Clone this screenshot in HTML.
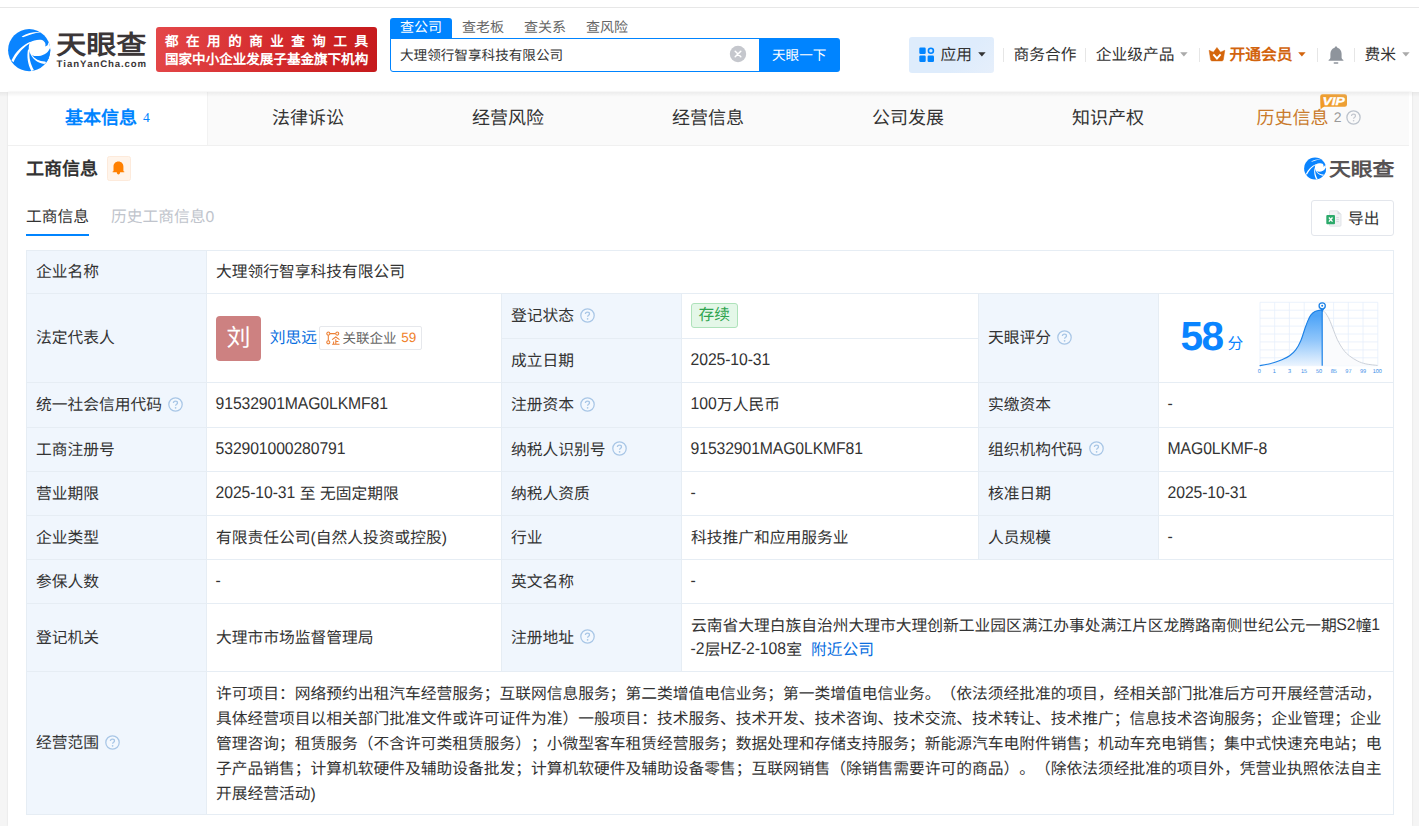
<!DOCTYPE html>
<html lang="zh-CN">
<head>
<meta charset="utf-8">
<title>天眼查</title>
<style>
*{box-sizing:border-box;margin:0;padding:0}
html,body{width:1419px;height:826px;overflow:hidden}
body{background:#f5f5f5;font-family:"Liberation Sans",sans-serif;color:#333;font-size:15.75px;position:relative;text-rendering:geometricPrecision;text-spacing-trim:space-all;font-kerning:none}
.abs{position:absolute}
.t{position:absolute;white-space:nowrap;line-height:1;margin-top:1.1px}
#topstrip{left:0;top:0;width:1419px;height:9px;background:#fff;border-bottom:2px solid #e7e7e7}
#header{left:0;top:8px;width:1419px;height:84px;background:#fff}
#hshadow{left:0;top:92px;width:1419px;height:5px;background:linear-gradient(rgba(0,0,0,.055),rgba(0,0,0,0))}
#card{left:8px;top:92px;width:1404px;height:734px;background:#fff;box-shadow:0 0 2px rgba(0,0,0,.10)}
#tabs{left:8px;top:92px;width:1400.8px;height:54px;background:#fafafa;border-bottom:1px solid #f0f0f0}
#tabs .on{position:absolute;left:0;top:0;width:200px;height:53px;background:#fff;border-right:1px solid #f2f2f2}
.tab{position:absolute;top:92px;height:53px;line-height:53.6px;font-size:18px;text-align:center;width:200px;color:#333;white-space:nowrap}
.sep{position:absolute;top:48px;width:1px;height:14px;background:#e6e6e6}
.nav{position:absolute;top:47.9px;line-height:16px;font-size:15.75px;color:#333;white-space:nowrap}
/* table */
.c{position:absolute;border:1px solid #e6edf4;background:#fff;padding:2.2px 9px 0;display:flex;align-items:center;font-size:15.75px;color:#333;white-space:nowrap;line-height:23.6px}
.l{background:#f0f6fd}
.a{display:inline-block;position:relative;top:-1.1px;left:-0.4px;letter-spacing:-0.11px;transform:scaleY(1.08);transform-origin:0 72%}
.q{display:block;width:15px;height:15px;margin-left:6.3px;position:relative;top:-1.9px}
</style>
</head>
<body>
<div class="abs" id="topstrip"></div>
<div class="abs" id="header"></div>
<div class="abs" id="card"></div>
<div class="abs" id="tabs"><div class="on"></div></div>
<div class="abs" id="hshadow"></div>
<!--HEADER-->
<!-- logo -->
<svg class="abs" style="left:4px;top:24px" width="52" height="52" viewBox="0 0 826 826">
 <defs><clipPath id="lc"><circle cx="400" cy="415" r="335"/></clipPath></defs>
 <circle cx="400" cy="415" r="335" fill="#0a84ff"/>
 <g clip-path="url(#lc)">
 <path d="M415 290 C470 252 590 236 640 268 C672 292 705 298 800 285 L800 425 L735 400 C722 520 685 600 640 636 C540 622 440 560 400 430 C385 380 395 320 415 290Z" fill="#fff"/>
 <path d="M600 248 L711 285 L692 338 L655 358 C668 318 655 282 600 248Z" fill="#0a84ff"/>
 <path d="M445 495 C540 530 680 500 728 388 L800 380 L800 660 L648 597 C560 590 490 555 445 495Z" fill="#0a84ff"/>
 <path d="M280 198 C370 146 480 122 584 130 C480 146 394 172 302 210Z" fill="#fff"/>
 <path d="M118 580 C180 438 300 328 420 280 L428 296 C322 352 212 470 150 606Z" fill="#fff"/>
 <path d="M433 746 C378 640 358 520 383 398 L407 430 C392 530 422 640 477 735Z" fill="#fff"/>
 </g>
</svg>
<div class="t" style="left:56.3px;top:31.6px;font-size:30px;font-weight:bold;color:#3b3637;transform:scaleY(.88);transform-origin:0 0">天眼查</div>
<div class="t" style="left:56.6px;top:59.4px;font-size:9.6px;font-weight:bold;color:#3b3637;letter-spacing:0.9px">TianYanCha.com</div>
<!-- red banner -->
<div class="abs" style="left:156px;top:27px;width:221px;height:45px;border-radius:3px;background:linear-gradient(100deg,#e4484a 0%,#d42a2c 55%,#c51a1c 100%)"></div>
<div class="t" style="left:165px;top:34px;font-size:13.5px;font-weight:bold;color:#fff;letter-spacing:7.55px">都在用的商业查询工具</div>
<div class="t" style="left:165px;top:52px;font-size:13.55px;font-weight:bold;color:#fff;letter-spacing:0">国家中小企业发展子基金旗下机构</div>
<!-- search -->
<div class="abs" style="left:390px;top:18px;width:62px;height:21px;background:#0084ff;border-radius:3px 3px 0 0"></div>
<div class="t" style="left:400px;top:19.2px;font-size:14px;color:#fff">查公司</div>
<div class="t" style="left:462px;top:19.2px;font-size:14px;color:#666">查老板</div>
<div class="t" style="left:524px;top:19.2px;font-size:14px;color:#666">查关系</div>
<div class="t" style="left:586px;top:19.2px;font-size:14px;color:#666">查风险</div>
<div class="abs" style="left:390px;top:38px;width:371px;height:34px;background:#fff;border:1px solid #0084ff;border-radius:0 0 0 3px"></div>
<div class="t" style="left:400px;top:48px;font-size:13.6px;color:#333">大理领行智享科技有限公司</div>
<svg class="abs" style="left:729px;top:45px" width="18" height="18" viewBox="0 0 18 18"><circle cx="9" cy="9" r="8.2" fill="#c5c7cd"/><path d="M6.2 6.2 L11.8 11.8 M11.8 6.2 L6.2 11.8" stroke="#fff" stroke-width="1.5" stroke-linecap="round"/></svg>
<div class="abs" style="left:759px;top:38px;width:81px;height:34px;background:#0084ff;border-radius:0 3px 3px 0"></div>
<div class="t" style="left:772px;top:48px;font-size:13.6px;color:#fff">天眼一下</div>
<!-- nav -->
<div class="abs" style="left:909px;top:37px;width:85px;height:36px;border-radius:3px;background:linear-gradient(135deg,#deecfc 0%,#deecfc 60%,#e6effb 100%)"></div>
<svg class="abs" style="left:919px;top:47px" width="16" height="16" viewBox="0 0 16 16"><rect x="0.3" y="0.5" width="6.4" height="6.4" rx="1.2" fill="#0084ff"/><rect x="0.3" y="8.6" width="6.4" height="6.4" rx="1.2" fill="#0084ff"/><rect x="8.6" y="8.6" width="6.4" height="6.4" rx="1.2" fill="#0084ff"/><circle cx="11.9" cy="3.8" r="2.5" fill="#cfe6ff" stroke="#0084ff" stroke-width="1.6"/></svg>
<div class="nav" style="left:940.5px">应用</div>
<svg class="abs" style="left:977.5px;top:52.3px" width="8" height="5" viewBox="0 0 8 5"><path d="M0.2 0.3 L7.6 0.3 L3.9 4.6Z" fill="#333"/></svg>
<div class="sep" style="left:1003px"></div>
<div class="nav" style="left:1013.5px">商务合作</div>
<div class="sep" style="left:1085px"></div>
<div class="nav" style="left:1095.7px">企业级产品</div>
<svg class="abs" style="left:1180.0px;top:52.3px" width="8" height="5" viewBox="0 0 8 5"><path d="M0.2 0.3 L7.6 0.3 L3.9 4.6Z" fill="#aaa"/></svg>
<div class="sep" style="left:1199px"></div>
<svg class="abs" style="left:1208px;top:47px" width="18" height="15" viewBox="0 0 18 15"><path d="M1.1 3.3 L5.4 5.2 L8.95 0.5 L12.5 5.2 L16.8 3.3 L15.3 12.8 Q15.1 13.9 14 13.9 L3.9 13.9 Q2.8 13.9 2.6 12.8Z" fill="#d4650b" stroke="#d4650b" stroke-width="0.5" stroke-linejoin="round"/><path d="M5.3 7.4 L8.95 11.5 L12.6 7.4" fill="none" stroke="#fff" stroke-width="1.9"/></svg>
<div class="nav" style="left:1229.5px;font-weight:bold;color:#d2640e">开通会员</div>
<svg class="abs" style="left:1297.8px;top:52.3px" width="8" height="5" viewBox="0 0 8 5"><path d="M0.2 0.3 L7.6 0.3 L3.9 4.6Z" fill="#d2640e"/></svg>
<div class="sep" style="left:1317px"></div>
<svg class="abs" style="left:1328px;top:45.5px" width="16" height="19" viewBox="0 0 16 19"><path d="M8 0.6 C8.8 0.6 9.3 1.1 9.3 1.8 C12 2.5 13.6 4.8 13.6 7.8 L13.6 11.4 C13.6 12.6 14.4 13.4 15.4 14 L15.4 14.8 L0.6 14.8 L0.6 14 C1.6 13.4 2.4 12.6 2.4 11.4 L2.4 7.8 C2.4 4.8 4 2.5 6.7 1.8 C6.7 1.1 7.2 0.6 8 0.6Z" fill="#8e949c"/><rect x="5.6" y="16.3" width="4.8" height="1.5" rx="0.7" fill="#8e949c"/></svg>
<div class="sep" style="left:1354px"></div>
<div class="nav" style="left:1364.5px">费米</div>
<svg class="abs" style="left:1401.5px;top:52.3px" width="8" height="5" viewBox="0 0 8 5"><path d="M0.2 0.3 L7.6 0.3 L3.9 4.6Z" fill="#aaa"/></svg>
<!--/HEADER-->
<!--TABS-->
<div class="tab" style="left:8px;width:199px;color:#0084ff;font-weight:bold;text-align:left;padding-left:57px">基本信息<span style="font-family:'Liberation Serif',serif;font-weight:normal;font-size:13.5px;margin-left:6px;position:relative;top:-1.8px">4</span></div>
<div class="tab" style="left:208px">法律诉讼</div>
<div class="tab" style="left:408px">经营风险</div>
<div class="tab" style="left:608px">经营信息</div>
<div class="tab" style="left:808px">公司发展</div>
<div class="tab" style="left:1008px">知识产权</div>
<div class="tab" style="left:1256.5px;width:auto;text-align:left;color:#c97a2c">历史信息</div>
<div class="t" style="left:1333.7px;top:108.9px;font-size:14px;color:#999">2</div>
<svg class="abs" style="left:1346px;top:110.3px" width="15" height="15" viewBox="0 0 15 15"><circle cx="7.5" cy="7.5" r="6.6" fill="none" stroke="#bcc3cc" stroke-width="1.3"/><path d="M5.5 6.1 C5.5 4.9 6.4 4.2 7.5 4.2 C8.7 4.2 9.5 4.9 9.5 5.9 C9.5 7.2 7.6 7.3 7.6 8.8" fill="none" stroke="#c4c8cf" stroke-width="1.2"/><circle cx="7.6" cy="10.7" r="0.8" fill="#c4c8cf"/></svg>
<!-- VIP badge -->
<svg class="abs" style="left:1320px;top:94px" width="28" height="16" viewBox="0 0 28 16"><defs><linearGradient id="vg" x1="0" y1="1" x2="1" y2="0"><stop offset="0" stop-color="#f3981c"/><stop offset="1" stop-color="#e9a344"/></linearGradient></defs><path d="M2.6 0.2 L24.8 0.2 Q27 0.2 27 2.4 L27 10.5 Q27 12.7 24.8 12.7 L4.2 12.7 Q2.2 13.4 0.6 15.4 Q0.2 10 0.2 2.6 Q0.2 0.2 2.6 0.2Z" fill="url(#vg)"/><text x="2.6" y="10.5" font-family="Liberation Sans, sans-serif" font-size="11.4" font-weight="bold" font-style="italic" fill="#fff" textLength="22.2" lengthAdjust="spacingAndGlyphs" stroke="#fff" stroke-width="0.35">VIP</text></svg>
<!--/TABS-->
<!--SECTION-->
<div class="t" style="left:26px;top:159px;font-size:18px;font-weight:bold;color:#333">工商信息</div>
<div class="abs" style="left:107px;top:156px;width:24px;height:25px;background:#fff4ea;border:1px solid #fdeadb;border-radius:2.5px"></div>
<svg class="abs" style="left:112.1px;top:160.5px" width="13" height="15" viewBox="0 0 13 15"><path d="M6.45 0.4 C9.4 0.4 11.4 2.6 11.4 5.6 L11.4 10.2 L12.3 10.5 L12.3 11.3 L8.1 11.3 C8.1 12.6 7.4 13.5 6.45 13.5 C5.5 13.5 4.8 12.6 4.8 11.3 L0.6 11.3 L0.6 10.5 L1.5 10.2 L1.5 5.6 C1.5 2.6 3.5 0.4 6.45 0.4Z" fill="#ff8000"/></svg>
<div class="t" style="left:26px;top:208.5px;font-size:15.75px;color:#333">工商信息</div>
<div class="abs" style="left:26px;top:233.5px;width:63px;height:2.5px;background:#0084ff"></div>
<div class="t" style="left:111px;top:208.5px;font-size:15.75px;color:#c0c4cc">历史工商信息0</div>
<!-- right small logo -->
<svg class="abs" style="left:1301.8px;top:155.3px" width="27" height="27" viewBox="0 0 826 826">
 <defs><clipPath id="lc2"><circle cx="400" cy="415" r="335"/></clipPath></defs>
 <circle cx="400" cy="415" r="335" fill="#0a84ff"/>
 <g clip-path="url(#lc2)">
 <path d="M415 290 C470 252 590 236 640 268 C672 292 705 298 800 285 L800 425 L735 400 C722 520 685 600 640 636 C540 622 440 560 400 430 C385 380 395 320 415 290Z" fill="#fff"/>
 <path d="M600 248 L711 285 L692 338 L655 358 C668 318 655 282 600 248Z" fill="#0a84ff"/>
 <path d="M445 495 C540 530 680 500 728 388 L800 380 L800 660 L648 597 C560 590 490 555 445 495Z" fill="#0a84ff"/>
 <path d="M280 198 C370 146 480 122 584 130 C480 146 394 172 302 210Z" fill="#fff"/>
 <path d="M118 580 C180 438 300 328 420 280 L428 296 C322 352 212 470 150 606Z" fill="#fff"/>
 <path d="M433 746 C378 640 358 520 383 398 L407 430 C392 530 422 640 477 735Z" fill="#fff"/>
 </g>
</svg>
<div class="t" style="left:1329px;top:158.6px;font-size:21.8px;font-weight:bold;color:#575354;transform:scaleY(.88);transform-origin:0 0">天眼查</div>
<!-- export button -->
<div class="abs" style="left:1311px;top:200px;width:83px;height:35.5px;background:#fff;border:1px solid #e3e6ec;border-radius:3px"></div>
<svg class="abs" style="left:1325.5px;top:209.5px" width="16" height="17" viewBox="0 0 16 17"><path d="M4.5 0.8 L11.5 0.8 L15 4.3 L15 15.2 Q15 16.2 14 16.2 L4.5 16.2 Q3.5 16.2 3.5 15.2 L3.5 1.8 Q3.5 0.8 4.5 0.8Z" fill="#f1f2f4" stroke="#dcdfe4" stroke-width="0.8"/><path d="M11.5 0.8 L11.5 4.3 L15 4.3Z" fill="#d5d9df"/><rect x="0.3" y="4.9" width="8.7" height="9.4" rx="1" fill="#2daa6b"/><path d="M2.9 7.5 L6.5 11.7 M6.5 7.5 L2.9 11.7" stroke="#fff" stroke-width="1.3"/><path d="M10.3 7.6 H12.8 M10.3 9.6 H12.8 M10.3 11.6 H12.8" stroke="#cfd3d9" stroke-width="0.9"/></svg>
<div class="t" style="left:1348px;top:210.5px;font-size:15.75px;color:#333">导出</div>
<!--/SECTION-->
<!--TABLE-->
<div class="c l" style="left:26px;top:250px;width:181px;height:44px;"><span>企业名称</span></div>
<div class="c" style="left:206px;top:250px;width:1188px;height:44px;"><div>大理领行智享科技有限公司</div></div>
<div class="c l" style="left:26px;top:293px;width:181px;height:90px;"><span>法定代表人</span></div>
<div class="c" style="left:206px;top:293px;width:296px;height:90px;"><div></div></div>
<div class="c l" style="left:501px;top:293px;width:181px;height:46px;"><span>登记状态</span><svg class="q" viewBox="0 0 15 15"><circle cx="7.5" cy="7.5" r="6.7" fill="#f3f8fe" stroke="#a8c6e6" stroke-width="1.25"/><path d="M5.4 6.1 C5.4 4.9 6.3 4.2 7.5 4.2 C8.7 4.2 9.5 4.9 9.5 5.9 C9.5 7.2 7.6 7.3 7.6 8.8" fill="none" stroke="#a8c6e6" stroke-width="1.25"/><circle cx="7.6" cy="10.8" r="0.85" fill="#a8c6e6"/></svg></div>
<div class="c" style="left:681px;top:293px;width:298px;height:46px;"><div><span style="display:inline-block;height:25px;line-height:23px;padding:0 6.5px;border:1px solid #aee2ba;background:#e4f7e8;color:#2ea44f;border-radius:3px;position:relative;top:-1.2px">存续</span></div></div>
<div class="c l" style="left:501px;top:338px;width:181px;height:45px;"><span>成立日期</span></div>
<div class="c" style="left:681px;top:338px;width:298px;height:45px;"><div><span class="a">2025-10-31</span></div></div>
<div class="c l" style="left:978px;top:293px;width:181px;height:90px;"><span>天眼评分</span><svg class="q" viewBox="0 0 15 15"><circle cx="7.5" cy="7.5" r="6.7" fill="#f3f8fe" stroke="#a8c6e6" stroke-width="1.25"/><path d="M5.4 6.1 C5.4 4.9 6.3 4.2 7.5 4.2 C8.7 4.2 9.5 4.9 9.5 5.9 C9.5 7.2 7.6 7.3 7.6 8.8" fill="none" stroke="#a8c6e6" stroke-width="1.25"/><circle cx="7.6" cy="10.8" r="0.85" fill="#a8c6e6"/></svg></div>
<div class="c" style="left:1158px;top:293px;width:236px;height:90px;"><div></div></div>
<div class="c l" style="left:26px;top:382px;width:181px;height:46px;"><span>统一社会信用代码</span><svg class="q" viewBox="0 0 15 15"><circle cx="7.5" cy="7.5" r="6.7" fill="#f3f8fe" stroke="#a8c6e6" stroke-width="1.25"/><path d="M5.4 6.1 C5.4 4.9 6.3 4.2 7.5 4.2 C8.7 4.2 9.5 4.9 9.5 5.9 C9.5 7.2 7.6 7.3 7.6 8.8" fill="none" stroke="#a8c6e6" stroke-width="1.25"/><circle cx="7.6" cy="10.8" r="0.85" fill="#a8c6e6"/></svg></div>
<div class="c" style="left:206px;top:382px;width:296px;height:46px;"><div><span class="a">91532901MAG0LKMF81</span></div></div>
<div class="c l" style="left:501px;top:382px;width:181px;height:46px;"><span>注册资本</span><svg class="q" viewBox="0 0 15 15"><circle cx="7.5" cy="7.5" r="6.7" fill="#f3f8fe" stroke="#a8c6e6" stroke-width="1.25"/><path d="M5.4 6.1 C5.4 4.9 6.3 4.2 7.5 4.2 C8.7 4.2 9.5 4.9 9.5 5.9 C9.5 7.2 7.6 7.3 7.6 8.8" fill="none" stroke="#a8c6e6" stroke-width="1.25"/><circle cx="7.6" cy="10.8" r="0.85" fill="#a8c6e6"/></svg></div>
<div class="c" style="left:681px;top:382px;width:298px;height:46px;"><div><span class="a">100</span>万人民币</div></div>
<div class="c l" style="left:978px;top:382px;width:181px;height:46px;"><span>实缴资本</span></div>
<div class="c" style="left:1158px;top:382px;width:236px;height:46px;"><div><span class="a">-</span></div></div>
<div class="c l" style="left:26px;top:427px;width:181px;height:45px;"><span>工商注册号</span></div>
<div class="c" style="left:206px;top:427px;width:296px;height:45px;"><div><span class="a">532901000280791</span></div></div>
<div class="c l" style="left:501px;top:427px;width:181px;height:45px;"><span>纳税人识别号</span><svg class="q" viewBox="0 0 15 15"><circle cx="7.5" cy="7.5" r="6.7" fill="#f3f8fe" stroke="#a8c6e6" stroke-width="1.25"/><path d="M5.4 6.1 C5.4 4.9 6.3 4.2 7.5 4.2 C8.7 4.2 9.5 4.9 9.5 5.9 C9.5 7.2 7.6 7.3 7.6 8.8" fill="none" stroke="#a8c6e6" stroke-width="1.25"/><circle cx="7.6" cy="10.8" r="0.85" fill="#a8c6e6"/></svg></div>
<div class="c" style="left:681px;top:427px;width:298px;height:45px;"><div><span class="a">91532901MAG0LKMF81</span></div></div>
<div class="c l" style="left:978px;top:427px;width:181px;height:45px;"><span>组织机构代码</span><svg class="q" viewBox="0 0 15 15"><circle cx="7.5" cy="7.5" r="6.7" fill="#f3f8fe" stroke="#a8c6e6" stroke-width="1.25"/><path d="M5.4 6.1 C5.4 4.9 6.3 4.2 7.5 4.2 C8.7 4.2 9.5 4.9 9.5 5.9 C9.5 7.2 7.6 7.3 7.6 8.8" fill="none" stroke="#a8c6e6" stroke-width="1.25"/><circle cx="7.6" cy="10.8" r="0.85" fill="#a8c6e6"/></svg></div>
<div class="c" style="left:1158px;top:427px;width:236px;height:45px;"><div><span class="a">MAG0LKMF-8</span></div></div>
<div class="c l" style="left:26px;top:471px;width:181px;height:45px;"><span>营业期限</span></div>
<div class="c" style="left:206px;top:471px;width:296px;height:45px;"><div><span class="a">2025-10-31</span> 至 无固定期限</div></div>
<div class="c l" style="left:501px;top:471px;width:181px;height:45px;"><span>纳税人资质</span></div>
<div class="c" style="left:681px;top:471px;width:298px;height:45px;"><div><span class="a">-</span></div></div>
<div class="c l" style="left:978px;top:471px;width:181px;height:45px;"><span>核准日期</span></div>
<div class="c" style="left:1158px;top:471px;width:236px;height:45px;"><div><span class="a">2025-10-31</span></div></div>
<div class="c l" style="left:26px;top:515px;width:181px;height:45px;"><span>企业类型</span></div>
<div class="c" style="left:206px;top:515px;width:296px;height:45px;"><div>有限责任公司(自然人投资或控股)</div></div>
<div class="c l" style="left:501px;top:515px;width:181px;height:45px;"><span>行业</span></div>
<div class="c" style="left:681px;top:515px;width:298px;height:45px;"><div>科技推广和应用服务业</div></div>
<div class="c l" style="left:978px;top:515px;width:181px;height:45px;"><span>人员规模</span></div>
<div class="c" style="left:1158px;top:515px;width:236px;height:45px;"><div><span class="a">-</span></div></div>
<div class="c l" style="left:26px;top:559px;width:181px;height:45px;"><span>参保人数</span></div>
<div class="c" style="left:206px;top:559px;width:296px;height:45px;"><div><span class="a">-</span></div></div>
<div class="c l" style="left:501px;top:559px;width:181px;height:45px;"><span>英文名称</span></div>
<div class="c" style="left:681px;top:559px;width:713px;height:45px;"><div><span class="a">-</span></div></div>
<div class="c l" style="left:26px;top:603px;width:181px;height:69px;"><span>登记机关</span></div>
<div class="c" style="left:206px;top:603px;width:296px;height:69px;"><div>大理市市场监督管理局</div></div>
<div class="c l" style="left:501px;top:603px;width:181px;height:69px;"><span>注册地址</span><svg class="q" viewBox="0 0 15 15"><circle cx="7.5" cy="7.5" r="6.7" fill="#f3f8fe" stroke="#a8c6e6" stroke-width="1.25"/><path d="M5.4 6.1 C5.4 4.9 6.3 4.2 7.5 4.2 C8.7 4.2 9.5 4.9 9.5 5.9 C9.5 7.2 7.6 7.3 7.6 8.8" fill="none" stroke="#a8c6e6" stroke-width="1.25"/><circle cx="7.6" cy="10.8" r="0.85" fill="#a8c6e6"/></svg></div>
<div class="c" style="left:681px;top:603px;width:713px;height:69px;"><div>云南省大理白族自治州大理市大理创新工业园区满江办事处满江片区龙腾路南侧世纪公元一期<span class="a">S2</span>幢<span class="a">1</span><br><span class="a">-2</span>层<span class="a">HZ-2-108</span>室<span style="color:#0a6fe0;margin-left:9px">附近公司</span></div></div>
<div class="c l" style="left:26px;top:671px;width:181px;height:144px;"><span>经营范围</span><svg class="q" viewBox="0 0 15 15"><circle cx="7.5" cy="7.5" r="6.7" fill="#f3f8fe" stroke="#a8c6e6" stroke-width="1.25"/><path d="M5.4 6.1 C5.4 4.9 6.3 4.2 7.5 4.2 C8.7 4.2 9.5 4.9 9.5 5.9 C9.5 7.2 7.6 7.3 7.6 8.8" fill="none" stroke="#a8c6e6" stroke-width="1.25"/><circle cx="7.6" cy="10.8" r="0.85" fill="#a8c6e6"/></svg></div>
<div class="c" style="left:206px;top:671px;width:1188px;height:144px;"><div style="line-height:25px">许可项目：网络预约出租汽车经营服务；互联网信息服务；第二类增值电信业务；第一类增值电信业务。（依法须经批准的项目，经相关部门批准后方可开展经营活动，<br>具体经营项目以相关部门批准文件或许可证件为准）一般项目：技术服务、技术开发、技术咨询、技术交流、技术转让、技术推广；信息技术咨询服务；企业管理；企业<br>管理咨询；租赁服务（不含许可类租赁服务）；小微型客车租赁经营服务；数据处理和存储支持服务；新能源汽车电附件销售；机动车充电销售；集中式快速充电站；电<br>子产品销售；计算机软硬件及辅助设备批发；计算机软硬件及辅助设备零售；互联网销售（除销售需要许可的商品）。（除依法须经批准的项目外，凭营业执照依法自主<br>开展经营活动)</div></div>
<!--/TABLE-->
<!--EXTRAS-->
<!-- legal rep -->
<div class="abs" style="left:216px;top:316px;width:45px;height:45px;background:#cd8181;border-radius:4px"></div>
<div class="t" style="left:216px;top:326px;width:45px;text-align:center;font-size:24px;color:#fff">刘</div>
<div class="t" style="left:269.8px;top:329.8px;font-size:15.75px;color:#0a6fe0">刘思远</div>
<div class="abs" style="left:318.8px;top:326px;width:103.2px;height:24px;background:#fff;border:1px solid #e6e8ec;border-radius:2px"></div>
<svg class="abs" style="left:325.5px;top:331px" width="14" height="14" viewBox="0 0 14 14"><g fill="#fff6ec" stroke="#ec7f34" stroke-width="1.05"><path d="M3.9 2.6 H9.6 M2.3 4.2 V9.7" fill="none"/><circle cx="2.3" cy="2.6" r="1.55"/><circle cx="11.2" cy="2.6" r="1.55"/><circle cx="2.3" cy="11.3" r="1.55"/></g><g stroke="#ec7f34" stroke-width="1.05" fill="none"><path d="M6.1 8.7 L9.8 6 L13.5 8.7 M9.8 8.3 V13.2 M9.8 10.4 H12.4 M7.6 10.4 V13.2 M6.1 13.3 H13.5"/></g></svg>
<div class="t" style="left:342.6px;top:331.3px;font-size:13.5px;color:#666">关联企业</div>
<div class="t" style="left:401.3px;top:330.1px;font-size:13.5px;color:#f07f2a">59</div>
<!-- score -->
<div class="t" style="left:1180.6px;top:315.4px;font-size:40.6px;font-weight:bold;color:#0a84ff;letter-spacing:-1.6px">58</div>
<div class="t" style="left:1227.6px;top:336.2px;font-size:15.75px;color:#0a84ff">分</div>
<svg class="abs" style="left:1252px;top:296px" width="136" height="84" viewBox="0 0 136 84">
 <defs><linearGradient id="cg" x1="0" y1="0" x2="0" y2="1"><stop offset="0.1" stop-color="#4ea4f8"/><stop offset="0.55" stop-color="#92c7fb"/><stop offset="1" stop-color="#ebf4fe"/></linearGradient></defs>
 <g stroke="#e6effb" stroke-width="0.8" fill="none"><path d="M8.0 6.3H125.8M8.0 14.2H125.8M8.0 22.2H125.8M8.0 30.1H125.8M8.0 38.0H125.8M8.0 45.9H125.8M8.0 53.9H125.8M8.0 61.8H125.8M8.0 69.7H125.8"/><path d="M8.0 6.3V69.7M22.7 6.3V69.7M37.4 6.3V69.7M52.2 6.3V69.7M66.9 6.3V69.7M81.6 6.3V69.7M96.3 6.3V69.7M111.0 6.3V69.7M125.8 6.3V69.7"/></g>
 <path d="M70.15 14.23 C70.66 14.62 72.01 15.04 73.2 16.57 C74.39 18.09 75.91 20.55 77.27 23.38 C78.62 26.21 79.97 30.16 81.33 33.55 C82.69 36.94 83.71 40.33 85.4 43.72 C87.09 47.11 89.47 51.17 91.5 53.88 C93.53 56.59 95.23 58.11 97.6 59.98 C99.97 61.84 103.02 63.75 105.73 65.07 C108.44 66.39 110.56 67.18 113.87 67.91 C117.18 68.64 123.61 69.19 125.56 69.44 L125.56 69.7 L70.2 69.7Z" fill="#fafbfd"/>
 <path d="M70.15 14.23 C70.66 14.62 72.01 15.04 73.2 16.57 C74.39 18.09 75.91 20.55 77.27 23.38 C78.62 26.21 79.97 30.16 81.33 33.55 C82.69 36.94 83.71 40.33 85.4 43.72 C87.09 47.11 89.47 51.17 91.5 53.88 C93.53 56.59 95.23 58.11 97.6 59.98 C99.97 61.84 103.02 63.75 105.73 65.07 C108.44 66.39 110.56 67.18 113.87 67.91 C117.18 68.64 123.61 69.19 125.56 69.44" fill="none" stroke="#c6ccd5" stroke-width="0.9"/>
 <path d="M7.63 69.64 C8.90 69.42 12.79 68.83 15.25 68.32 C17.71 67.81 19.83 67.39 22.37 66.59 C24.91 65.79 27.96 64.67 30.5 63.54 C33.04 62.41 35.42 61.39 37.62 59.78 C39.82 58.17 41.86 56.39 43.72 53.88 C45.58 51.37 47.27 48.25 48.8 44.73 C50.32 41.21 51.68 36.09 52.87 32.74 C54.06 29.39 54.90 26.91 55.92 24.6 C56.94 22.30 57.78 20.44 58.97 18.91 C60.16 17.38 61.68 16.21 63.03 15.45 C64.39 14.69 65.91 14.54 67.1 14.34 C68.29 14.14 69.64 14.25 70.15 14.23 L70.2 69.7 L7.63 69.7Z" fill="url(#cg)"/>
 <path d="M7.63 69.64 C8.90 69.42 12.79 68.83 15.25 68.32 C17.71 67.81 19.83 67.39 22.37 66.59 C24.91 65.79 27.96 64.67 30.5 63.54 C33.04 62.41 35.42 61.39 37.62 59.78 C39.82 58.17 41.86 56.39 43.72 53.88 C45.58 51.37 47.27 48.25 48.8 44.73 C50.32 41.21 51.68 36.09 52.87 32.74 C54.06 29.39 54.90 26.91 55.92 24.6 C56.94 22.30 57.78 20.44 58.97 18.91 C60.16 17.38 61.68 16.21 63.03 15.45 C64.39 14.69 65.91 14.54 67.1 14.34 C68.29 14.14 69.64 14.25 70.15 14.23" fill="none" stroke="#1b80e6" stroke-width="1.1"/>
 <path d="M70.2 13.5 V69.7" stroke="#1b80e6" stroke-width="1.2"/>
 <path d="M67.7 12.2 L72.7 12.2 L70.2 16Z" fill="#1b80e6"/>
 <circle cx="70.2" cy="9.85" r="3.1" fill="#fff" stroke="#1b80e6" stroke-width="1.25"/>
 <circle cx="70.2" cy="9.85" r="1" fill="#1b80e6"/>
 <g font-family="Liberation Sans, sans-serif" font-size="5.6" fill="#3a8ee8" text-anchor="middle"><text x="7.4" y="77.3">0</text><text x="22.4" y="77.3">1</text><text x="37.5" y="77.3">3</text><text x="52.0" y="77.3">15</text><text x="67.0" y="77.3">50</text><text x="81.8" y="77.3">85</text><text x="96.4" y="77.3">97</text><text x="111.0" y="77.3">99</text><text x="125.3" y="77.3">100</text></g>
</svg>
<!--/EXTRAS-->
</body>
</html>
